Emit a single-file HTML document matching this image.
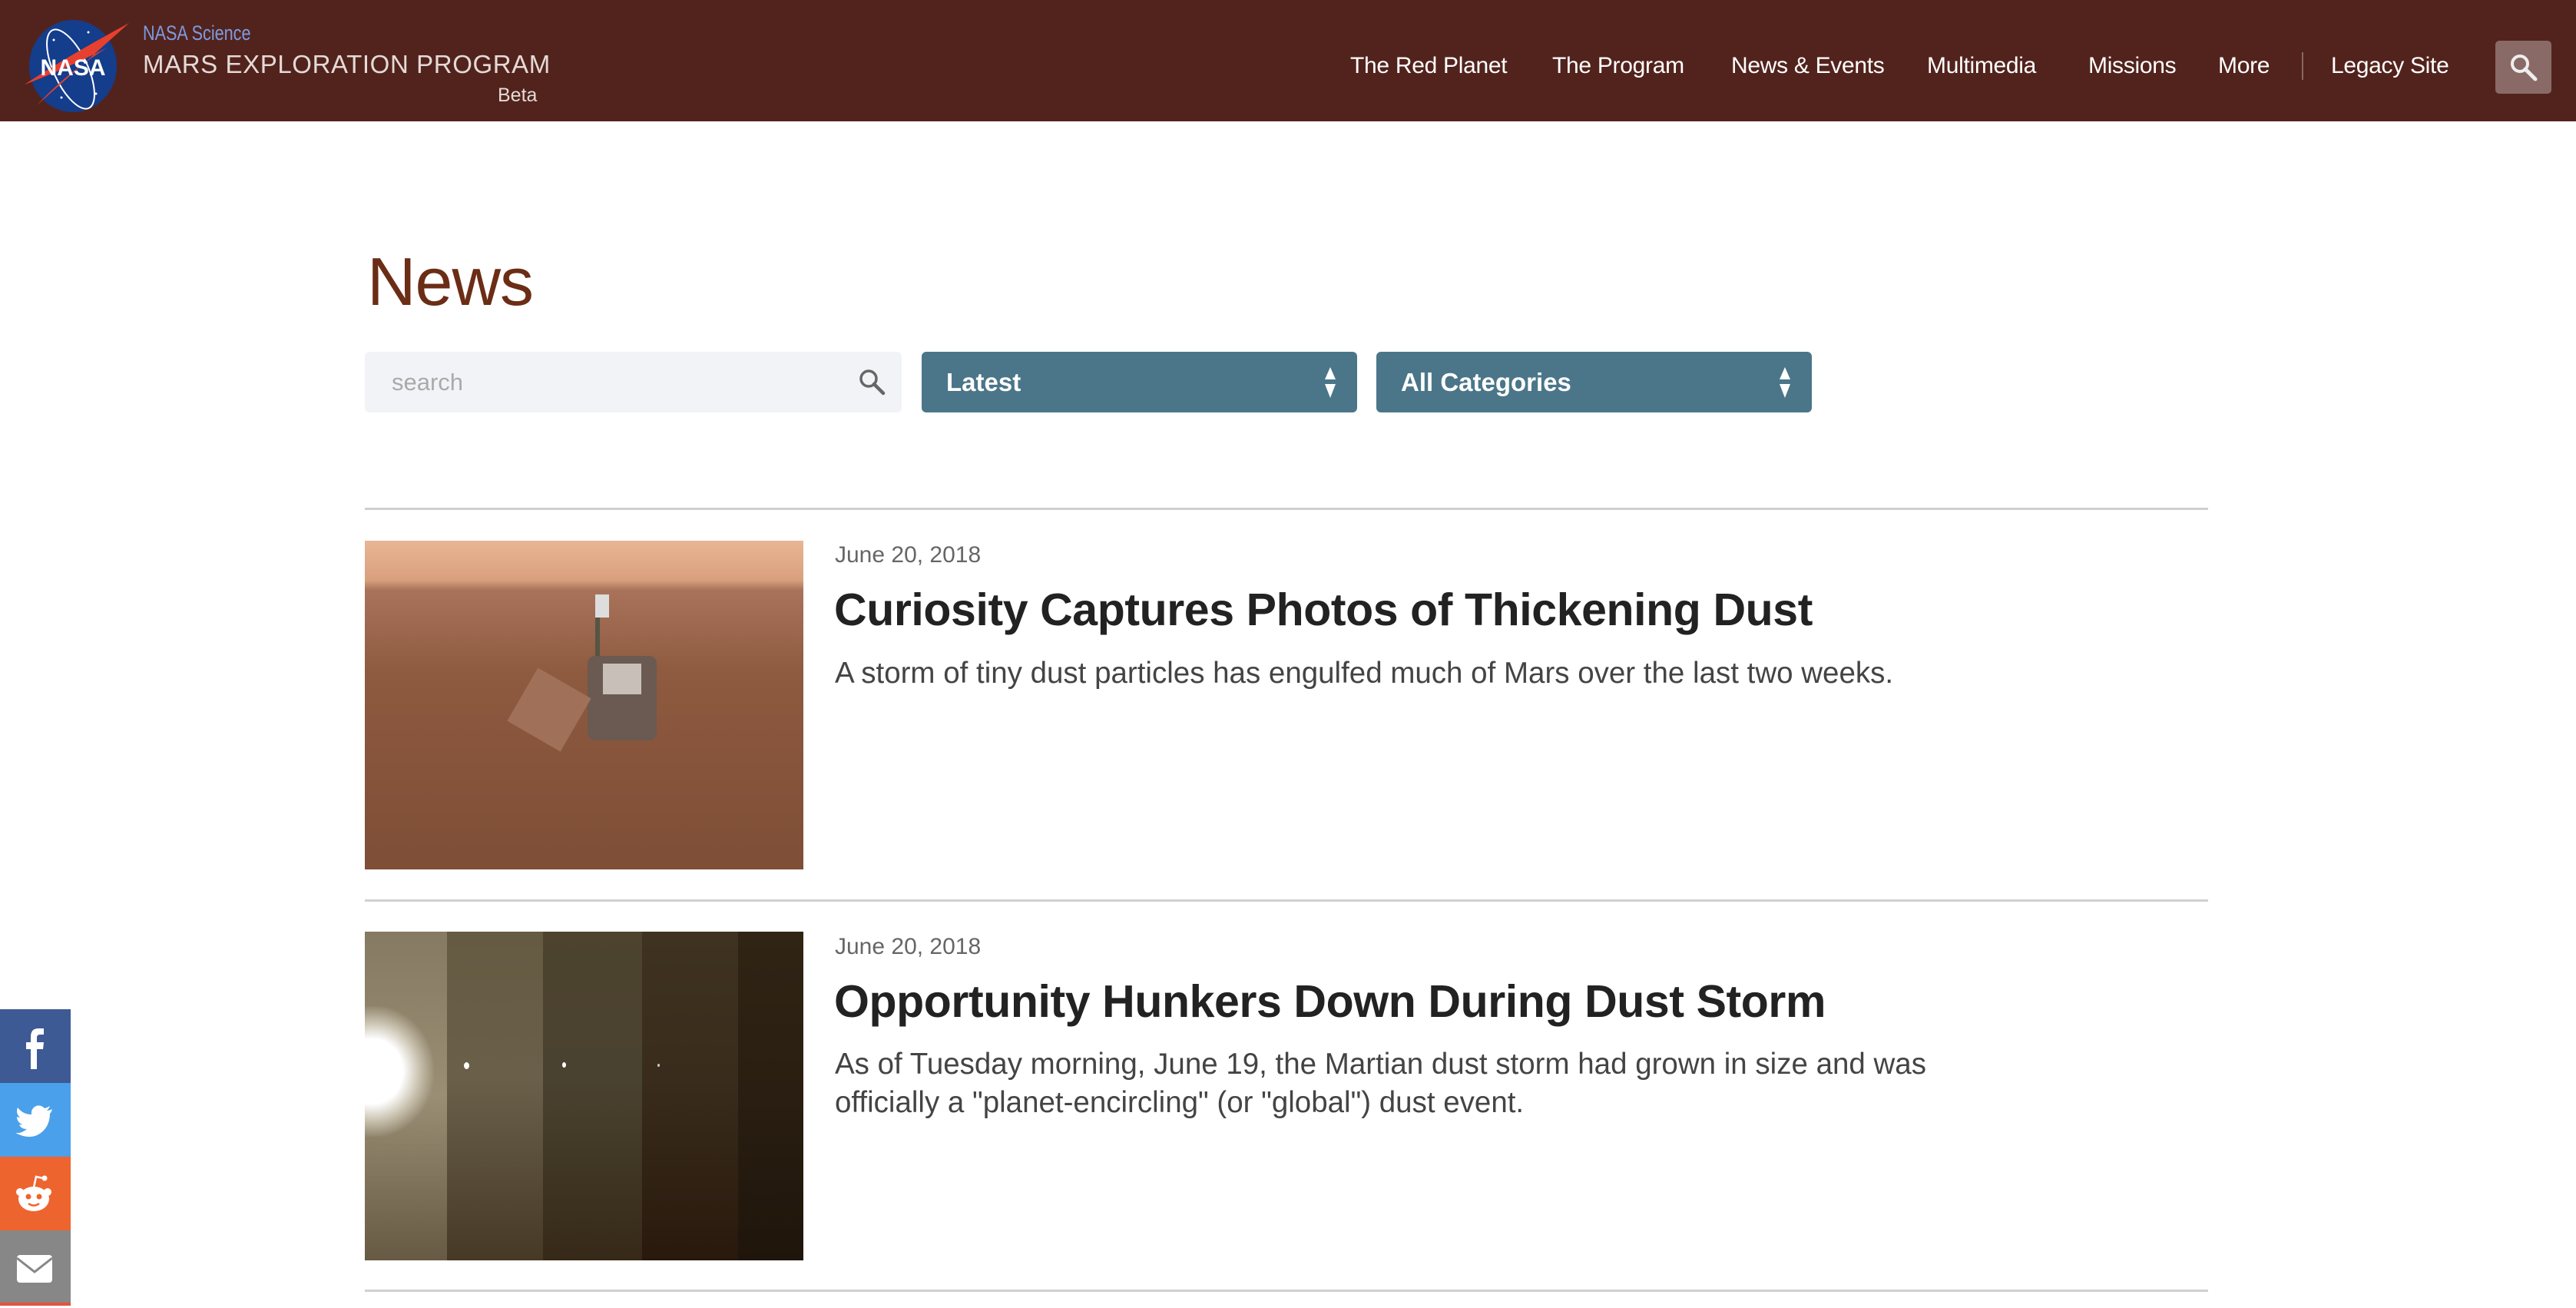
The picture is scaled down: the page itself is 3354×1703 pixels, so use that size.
<!DOCTYPE html>
<html><head><meta charset="utf-8">
<style>
*{margin:0;padding:0;box-sizing:border-box}
body{width:3354px;height:1700px;overflow:hidden;background:#fff;font-family:"Liberation Sans",sans-serif;position:relative}
.hdr{position:absolute;left:0;top:0;width:3354px;height:158px;background:#52231d}
.abs{position:absolute;white-space:nowrap}
.nav{top:69px;font-size:30px;color:#fff;letter-spacing:-0.3px}
.sel{position:absolute;top:458px;height:79px;background:#4b7689;border-radius:6px;color:#fff;font-weight:bold;font-size:33px;line-height:79px;padding-left:32px}
.arr{position:absolute;right:26px;top:20px}
.line{position:absolute;left:475px;width:2400px;height:3px;background:#d0d0d0}
.date{font-size:30px;color:#666}
.title{font-size:59px;font-weight:bold;color:#222;letter-spacing:-0.4px}
.desc{font-size:38.5px;color:#444;line-height:50px}
.soc{position:absolute;left:0;width:92px;height:96px}
</style></head><body>
<div class="hdr"></div>
<svg class="abs" style="left:30px;top:22px" width="140" height="130" viewBox="0 0 140 130">
<ellipse cx="65" cy="64" rx="57" ry="60" fill="#143d8c"/>
<circle cx="40" cy="30" r="1.5" fill="#fff"/><circle cx="85" cy="20" r="1.5" fill="#fff"/><circle cx="95" cy="100" r="1.5" fill="#fff"/><circle cx="50" cy="105" r="1.5" fill="#fff"/><circle cx="30" cy="60" r="1.2" fill="#fff"/>
<ellipse cx="62" cy="68" rx="22" ry="56" fill="none" stroke="#fff" stroke-width="2" transform="rotate(-25 62 68)"/>
<path d="M2 88 Q60 50 138 8 Q80 60 18 115 Q60 70 110 40 Q50 70 2 88Z" fill="#e8402e"/>
<text x="65" y="76" font-family="Liberation Sans" font-weight="bold" font-size="30" fill="#fff" text-anchor="middle">NASA</text>
</svg>
<div class="abs" style="left:186px;top:28px;font-size:27px;color:#7d9be0;transform:scaleX(0.8);transform-origin:left">NASA Science</div>
<div class="abs" style="left:186px;top:65px;font-size:33px;color:#e4dad6;letter-spacing:0.6px">MARS EXPLORATION PROGRAM</div>
<div class="abs" style="left:648px;top:110px;font-size:25px;color:#e4dad6">Beta</div>
<div class="abs nav" style="left:1758px">The Red Planet</div>
<div class="abs nav" style="left:2021px">The Program</div>
<div class="abs nav" style="left:2254px">News &amp; Events</div>
<div class="abs nav" style="left:2509px">Multimedia</div>
<div class="abs nav" style="left:2719px">Missions</div>
<div class="abs nav" style="left:2888px">More</div>
<div class="abs" style="left:2997px;top:68px;width:2px;height:36px;background:#8a6660"></div>
<div class="abs nav" style="left:3035px">Legacy Site</div>
<div class="abs" style="left:3249px;top:53px;width:73px;height:69px;background:#8a6a66;border-radius:5px"></div>
<svg class="abs" style="left:3266px;top:68px" width="40" height="40" viewBox="0 0 40 40"><circle cx="15" cy="15" r="10" fill="none" stroke="#eee" stroke-width="4"/><path d="M22 22 L35 35" stroke="#eee" stroke-width="5" stroke-linecap="round"/></svg>

<div class="abs" style="left:478px;top:316px;font-size:88px;font-weight:300;color:#6b2d15;letter-spacing:-1px">News</div>
<div class="abs" style="left:475px;top:458px;width:699px;height:79px;background:#f2f3f6;border-radius:6px"></div>
<div class="abs" style="left:510px;top:480px;font-size:31px;color:#aaa">search</div>
<svg class="abs" style="left:1116px;top:478px" width="40" height="40" viewBox="0 0 40 40"><circle cx="15" cy="15" r="10" fill="none" stroke="#666" stroke-width="3.5"/><path d="M22 22 L34 34" stroke="#666" stroke-width="4.5" stroke-linecap="round"/></svg>
<div class="sel" style="left:1200px;width:567px">Latest<svg class="arr" width="18" height="40" viewBox="0 0 18 40"><path d="M9 0 L16 16 H2Z M9 40 L16 22 H2Z" fill="#fff"/></svg></div>
<div class="sel" style="left:1792px;width:567px">All Categories<svg class="arr" width="18" height="40" viewBox="0 0 18 40"><path d="M9 0 L16 16 H2Z M9 40 L16 22 H2Z" fill="#fff"/></svg></div>

<div class="line" style="top:661px"></div>
<div class="abs" style="left:475px;top:704px;width:571px;height:428px;overflow:hidden;background:linear-gradient(180deg,#e9b594 0%,#d9a07e 12%,#a8735a 15%,#8e5a40 40%,#7e4e36 100%)">
<div style="position:absolute;left:300px;top:70px;width:18px;height:30px;background:#ddd"></div>
<div style="position:absolute;left:300px;top:100px;width:6px;height:60px;background:#554"></div>
<div style="position:absolute;left:290px;top:150px;width:90px;height:110px;background:#6a5a52;border-radius:10px"></div>
<div style="position:absolute;left:310px;top:160px;width:50px;height:40px;background:#c8c0b8"></div>
<div style="position:absolute;left:200px;top:180px;width:80px;height:80px;background:#a07058;transform:rotate(30deg)"></div>
</div>
<div class="abs date" style="left:1087px;top:706px">June 20, 2018</div>
<div class="abs title" style="left:1086px;top:760px">Curiosity Captures Photos of Thickening Dust</div>
<div class="abs desc" style="left:1087px;top:852px">A storm of tiny dust particles has engulfed much of Mars over the last two weeks.</div>

<div class="line" style="top:1171px"></div>
<div class="abs" style="left:475px;top:1213px;width:571px;height:428px;overflow:hidden">
<div style="display:flex;width:100%;height:100%">
<div style="width:18.7%;background:linear-gradient(180deg,#857a62,#9a8e74 50%,#675a44)"></div>
<div style="width:22%;background:linear-gradient(180deg,#655a42,#6a604a 45%,#463a26)"></div>
<div style="width:22.5%;background:linear-gradient(180deg,#4d432e,#4a4230 45%,#362918)"></div>
<div style="width:22%;background:linear-gradient(180deg,#3e3220,#3a2c1c 45%,#28190c)"></div>
<div style="width:14.8%;background:linear-gradient(180deg,#302414,#2a1e12 50%,#1f150a)"></div>
</div>
<div style="position:absolute;left:-70px;top:97px;width:160px;height:170px;background:radial-gradient(ellipse,#fff 0%,#fff 35%,rgba(230,225,210,0.6) 55%,transparent 72%)"></div>
<div style="position:absolute;left:129px;top:170px;width:7px;height:9px;background:#fff;border-radius:50%"></div>
<div style="position:absolute;left:257px;top:170px;width:5px;height:7px;background:#fff;border-radius:50%"></div>
<div style="position:absolute;left:381px;top:172px;width:3px;height:4px;background:#ccc;border-radius:50%"></div>
</div>
<div class="abs date" style="left:1087px;top:1216px">June 20, 2018</div>
<div class="abs title" style="left:1086px;top:1270px">Opportunity Hunkers Down During Dust Storm</div>
<div class="abs desc" style="left:1087px;top:1361px">As of Tuesday morning, June 19, the Martian dust storm had grown in size and was<br>officially a "planet-encircling" (or "global") dust event.</div>
<div class="line" style="top:1679px"></div>

<div class="soc" style="top:1314px;background:#3e5a94"><svg width="92" height="96" viewBox="0 0 92 96"><path d="M48 78 V52 H56 L57 43 H48 V37 Q48 33 52 33 H57 V25 H50 Q40 25 40 36 V43 H34 V52 H40 V78Z" fill="#fff"/></svg></div>
<div class="soc" style="top:1410px;background:#4aa0ea"><svg width="92" height="96" viewBox="0 0 92 96"><path d="M68 34 Q64 36 61 36 Q64 33 65 30 Q62 32 58 33 Q52 27 45 31 Q40 35 41 41 Q30 41 23 32 Q20 39 26 45 Q24 45 22 44 Q22 51 29 54 Q27 55 25 54 Q27 60 35 60 Q28 66 20 65 Q45 78 60 58 Q65 50 65 40 Q67 38 68 34Z" fill="#fff"/></svg></div>
<div class="soc" style="top:1506px;background:#ee642e"><svg width="92" height="96" viewBox="0 0 92 96"><ellipse cx="44" cy="55" rx="20" ry="16" fill="#fff"/><circle cx="26" cy="46" r="5" fill="#fff"/><circle cx="62" cy="46" r="5" fill="#fff"/><path d="M44 40 L47 26 L56 28" stroke="#fff" stroke-width="2.5" fill="none"/><circle cx="58" cy="28" r="3.5" fill="#fff"/><circle cx="37" cy="52" r="3.5" fill="#ee642e"/><circle cx="51" cy="52" r="3.5" fill="#ee642e"/><path d="M37 61 Q44 66 51 61" stroke="#ee642e" stroke-width="2.5" fill="none"/></svg></div>
<div class="soc" style="top:1602px;background:#878787"><svg width="92" height="96" viewBox="0 0 92 96"><rect x="22" y="32" width="46" height="36" rx="4" fill="#fff"/><path d="M22 36 L45 54 L68 36" stroke="#878787" stroke-width="3" fill="none"/></svg></div>
<div class="soc" style="top:1696px;height:4px;background:#e5533d"></div>
</body></html>
